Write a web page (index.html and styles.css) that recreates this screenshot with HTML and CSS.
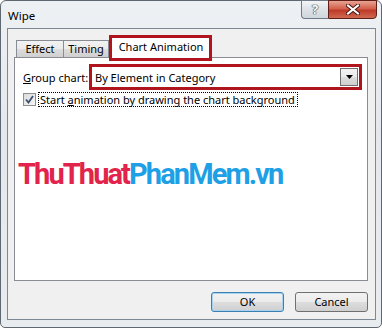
FILE: index.html
```html
<!DOCTYPE html>
<html>
<head>
<meta charset="utf-8">
<link rel="stylesheet" href="styles.css">
</head>
<body>
<div class="window">
  <div class="titlebar">
    <span class="title">Wipe</span>
    <div class="caption-btns">
      <span class="cap-help">?</span>
      <span class="cap-close">
        <svg width="14" height="11" viewBox="0 0 14 11"><path d="M2 1.5 L12 9.5 M12 1.5 L2 9.5" stroke="#4a1510" stroke-width="4" stroke-linecap="square"/><path d="M2 1.5 L12 9.5 M12 1.5 L2 9.5" stroke="#fff" stroke-width="2" stroke-linecap="square"/></svg>
      </span>
    </div>
  </div>
  <div class="client">
    <div class="tabs">
      <div class="tab">Effect</div>
      <div class="tab">Timing</div>
      <div class="tab tab-active">Chart Animation</div>
    </div>
    <div class="panel">
      <div class="row-group">
        <span class="label"><u>G</u>roup chart:</span>
        <div class="combo">
          <span class="combo-text">By Element in Category</span>
          <span class="combo-btn"><svg width="7" height="4" viewBox="0 0 7 4"><path d="M0 0 H7 L3.5 4 Z" fill="#000"/></svg></span>
        </div>
      </div>
      <div class="row-check">
        <span class="checkbox"><svg width="9" height="9" viewBox="0 0 9 9"><path d="M1 4.5 L3.5 7.5 L8 1" stroke="#3b4f73" stroke-width="1.8" fill="none"/></svg></span>
        <span class="check-label">Start <u>a</u>nimation by drawing the chart background</span>
      </div>
      <div class="logo"><span class="logo-red">ThuThuat</span><span class="logo-blue">PhanMem.vn</span></div>
    </div>
    <div class="buttons">
      <div class="btn btn-default">OK</div>
      <div class="btn">Cancel</div>
    </div>
  </div>
</div>
</body>
</html>
```

FILE: styles.css
```css
html, body {
  margin: 0;
  padding: 0;
  background: #ffffff;
}
body {
  font-family: "Noto Sans", "DejaVu Sans", sans-serif;
  font-size: 11px;
  color: #000;
  white-space: nowrap;
}
.window {
  width: 382px;
  height: 328px;
  box-sizing: border-box;
  border: 1px solid #5f6770;
  border-radius: 6px 6px 5px 5px;
  background: linear-gradient(180deg, #eef1f4 0%, #e4e8ec 40%, #e9ecef 100%);
  display: flex;
  flex-direction: column;
}
.titlebar {
  height: 27px;
  display: flex;
  align-items: flex-start;
}
.title {
  margin: 7px 0 0 7px;
  font-size: 11.5px;
  line-height: 16px;
}
.caption-btns {
  margin-left: auto;
  margin-right: 4px;
  display: flex;
  margin-top: -1px;
}
.cap-help {
  width: 27px;
  height: 19px;
  box-sizing: border-box;
  border: 1px solid #6f7b88;
  border-right: none;
  border-radius: 0 0 0 4px;
  background: linear-gradient(180deg, #f3f5f7 0%, #dde2e7 50%, #cfd6dd 100%);
  color: #fff;
  font-weight: bold;
  font-size: 13px;
  line-height: 17px;
  text-align: center;
  text-shadow: 0 0 1px #333, 0 0 1px #333, 0 0 1px #333;
}
.cap-close {
  width: 49px;
  height: 19px;
  box-sizing: border-box;
  border: 1px solid #5e1d16;
  border-radius: 0 0 4px 0;
  background: linear-gradient(180deg, #e8a493 0%, #d2604c 45%, #c0392a 55%, #cf6a4f 100%);
  display: flex;
  align-items: center;
  justify-content: center;
}
.client {
  margin: 0 5px 7px 6px;
  flex: 1;
  border: 1px solid #7d8894;
  background: #f0f0f0;
  display: flex;
  flex-direction: column;
  padding: 6px 7px 6px 6px;
}
.tabs {
  display: flex;
  align-items: flex-end;
  height: 22px;
  padding-left: 2px;
  position: relative;
  z-index: 1;
}
.tab {
  height: 17px;
  box-sizing: border-box;
  border: 1px solid #898c95;
  border-bottom: none;
  background: linear-gradient(180deg, #f2f2f2 0%, #ebebeb 50%, #dddddd 51%, #cfcfcf 100%);
  padding: 0;
  text-align: center;
  line-height: 16px;
}
.tab:nth-child(1) { width: 48px; }
.tab:nth-child(2) { width: 45px; border-left: none; }
.tab-active {
  height: 26px;
  width: 103px;
  margin-bottom: -4px;
  border: 3px solid #b0141d;
  background: #ffffff;
  line-height: 18px;
  padding: 0 0 0 1px;
}
.panel {
  height: 224px;
  box-sizing: border-box;
  border: 1px solid #898c95;
  background: #ffffff;
  padding: 6px 5px 0 8px;
}
.row-group {
  display: flex;
  align-items: center;
  height: 26px;
}
.label {
  width: 66px;
}
.combo {
  flex: 1;
  height: 26px;
  box-sizing: border-box;
  border: 3px solid #b0141d;
  background: #fff;
  display: flex;
  align-items: center;
  padding: 0 1px 0 3px;
}
.combo-text {
  flex: 1;
}
.combo-btn {
  width: 18px;
  height: 18px;
  box-sizing: border-box;
  border: 1px solid #707070;
  background: linear-gradient(180deg, #f2f2f2 0%, #ebebeb 50%, #dddddd 51%, #cfcfcf 100%);
  display: flex;
  align-items: center;
  justify-content: center;
}
.row-check {
  display: flex;
  align-items: center;
  margin-top: 2px;
  height: 15px;
}
.checkbox {
  width: 13px;
  height: 13px;
  box-sizing: border-box;
  border: 1px solid #8e8f8f;
  background: linear-gradient(135deg, #dcdcdc 0%, #f6f6f6 100%);
  display: flex;
  align-items: center;
  justify-content: center;
}
.check-label {
  margin-left: 2px;
  border: 1px dotted #000;
  padding: 0 2px 0 1px;
  line-height: 13px;
}
.logo {
  margin-top: 52px;
  margin-left: -5px;
  font-family: Roboto, "Liberation Sans", sans-serif;
  font-weight: bold;
  font-size: 29px;
  line-height: 30px;
  letter-spacing: -1.9px;
}
.logo-red { color: #e2234b; }
.logo-blue { color: #1e9fe6; }
.buttons {
  display: flex;
  justify-content: flex-end;
  gap: 11px;
  margin-top: 11px;
}
.btn {
  width: 73px;
  height: 20px;
  box-sizing: border-box;
  border: 1px solid #707070;
  border-radius: 3px;
  background: linear-gradient(180deg, #f2f2f2 0%, #ebebeb 50%, #dddddd 51%, #cfcfcf 100%);
  text-align: center;
  line-height: 18px;
}
.btn-default {
  border-color: #3c7fb1;
  box-shadow: inset 0 0 0 1px #a6d4f0;
}
```
